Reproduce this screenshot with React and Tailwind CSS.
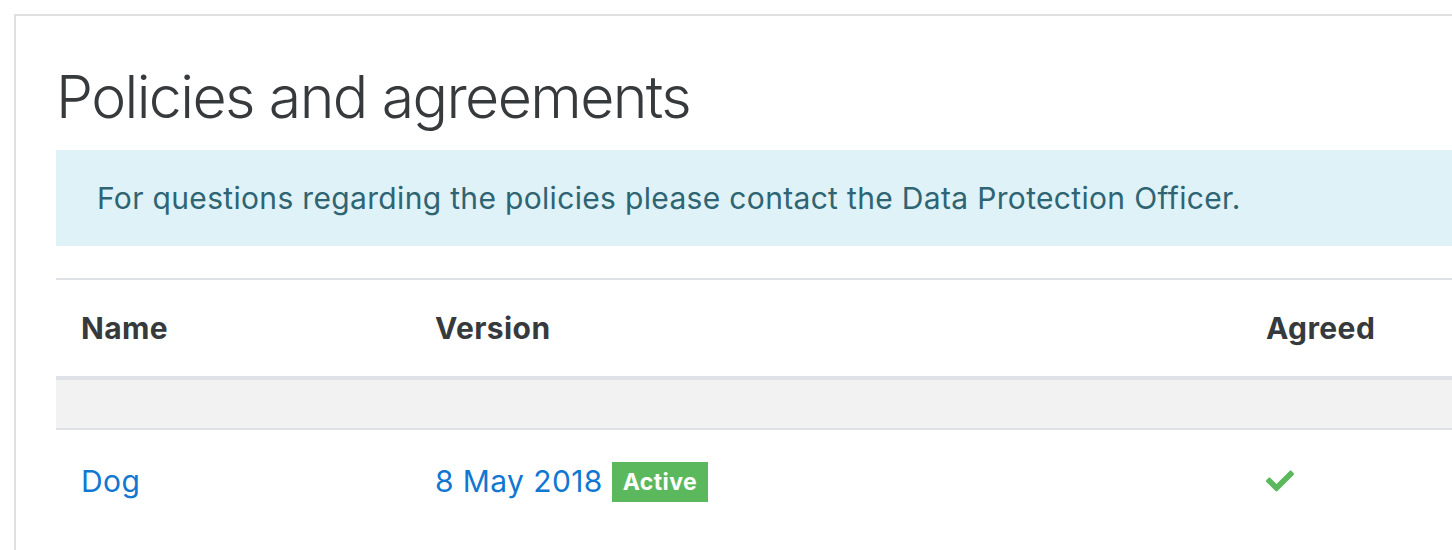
import { FaCheck } from 'react-icons/fa';

export default function App() {
  return (
    <div className="w-[1452px] h-[550px] overflow-hidden bg-white font-['Inter','Liberation_Sans',sans-serif] text-[#373a3c]">
      <div className="ml-[14px] mt-[14px] w-[1700px] h-[600px] border-2 border-[#e0e0e0] pl-[40px] pt-[41px]">
        <h2 className="text-[59px] font-light leading-[80px] tracking-[-1.6px]">Policies and agreements</h2>

        <div className="mt-[13px] h-[96px] bg-[#def2f8] text-[#2f6473] px-[41px] flex items-center text-[30px] tracking-[0.33px]">
          For questions regarding the policies please contact the Data Protection Officer.
        </div>

        <div className="mt-[32px] w-[1500px] border-t-2 border-[#dee2e6]">
          <div className="flex h-[100px] items-center border-b-4 border-[#dee2e6] text-[30px] font-bold tracking-[0.4px]">
            <div className="w-[354px] pl-[25px]">Name</div>
            <div className="w-[831px] pl-[25px]">Version</div>
            <div className="pl-[25px]">Agreed</div>
          </div>
          <div className="h-[50px] bg-[#f2f2f2] border-b-2 border-[#dee2e6]" />
          <div className="flex h-[102px] items-center text-[30px] tracking-[0.4px]">
            <div className="w-[354px] pl-[25px] text-[#1177d1]">Dog</div>
            <div className="w-[831px] pl-[25px] flex items-center gap-[9px]">
              <span className="text-[#1177d1]">8 May 2018</span>
              <span className="bg-[#5cb85c] text-white text-[23px] font-bold h-[40px] px-[11px] flex items-center mt-[2px] tracking-[0.4px]">Active</span>
            </div>
            <div className="pl-[25px] text-[#5cb85c]">
              <FaCheck size={28} />
            </div>
          </div>
        </div>
      </div>
    </div>
  );
}
